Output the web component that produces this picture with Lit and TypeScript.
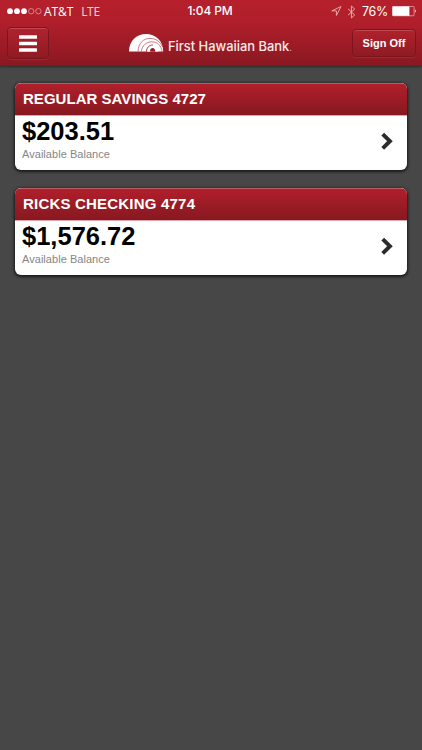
import { LitElement, html, css } from "lit";
import { customElement, property } from "lit/decorators.js";

@customElement("status-bar")
class StatusBar extends LitElement {
  static styles = css`
    :host { display: grid; grid-template-columns: 1fr auto 1fr; align-items: center; height: 22px; padding: 0 5px 0 7px; color: #fff; font: 12px/22px "Open Sans", "Noto Sans", sans-serif; }
    .side { display: flex; align-items: center; height: 22px; }
    .right { justify-content: flex-end; }
    .carrier { margin-left: 2px; letter-spacing: -0.1px; }
    .net { margin-left: 8px; opacity: 0.8; letter-spacing: -0.3px; }
    .time { font: 500 12px/22px Inter, "Open Sans", sans-serif; letter-spacing: -0.15px; margin-right: 4px; height: 23px; }
    .pct { font: 12.5px/22px Inter, sans-serif; margin: 0 4px 0 6px; letter-spacing: -0.3px; }
    svg { display: block; flex: none; }
    .bt { margin-left: 5px; }
  `;
  render() {
    return html`
      <div class="side">
        <svg width="35" height="7" viewBox="0 0 35 7">
          <g fill="#fff"><circle cx="3" cy="3.2" r="2.9" /><circle cx="10" cy="3.2" r="2.9" /><circle cx="17" cy="3.2" r="2.9" /></g>
          <g fill="none" stroke="#eba9ae" stroke-width=".7"><circle cx="24.2" cy="3.2" r="2.7" /><circle cx="31.4" cy="3.2" r="2.7" /></g>
        </svg>
        <span class="carrier">AT&amp;T</span><span class="net">LTE</span>
      </div>
      <span class="time">1:04 PM</span>
      <div class="side right">
        <svg width="11" height="11" viewBox="0 0 11 11" fill="none" stroke="#eab0b4" stroke-width=".9" stroke-linejoin="round"><path d="M10 .5L.8 4.9H5.4V9.5Z" /></svg>
        <svg class="bt" width="9" height="14" viewBox="0 0 9 14" fill="none" stroke="#eab0b4" stroke-width=".95"><path d="M1 3.8L7.7 10L4.4 13V1L7.7 4L1 10.2" /></svg>
        <span class="pct">76%</span>
        <svg width="25" height="11" viewBox="0 0 25 11"><rect x=".5" y=".4" width="21.6" height="9.4" rx="1" fill="none" stroke="#eab0b4" stroke-width=".8" /><rect x=".5" y=".4" width="16.9" height="9.4" fill="#fff" /><path d="M23 3.6Q24.8 5.1 23 6.7Z" fill="#fff" /></svg>
      </div>`;
  }
}

@customElement("account-card")
class AccountCard extends LitElement {
  @property() name = "";
  @property() balance = "";
  @property({ type: Number }) tracking = 0;
  static styles = css`
    :host { display: block; box-sizing: border-box; height: 87px; border-radius: 6px; overflow: hidden; background: #fff; box-shadow: 0 1px 3px 1px rgba(0, 0, 0, 0.65); font-family: "Liberation Sans", Arial, sans-serif; }
    .title { box-sizing: border-box; height: 33px; padding: 0 8px; border-top: 1px solid #bb5d65; border-bottom: 1px solid #dba5a9; background: linear-gradient(#b01f2b, #871820); color: #fff; font-size: 15px; font-weight: bold; line-height: 29px; white-space: nowrap; }
    .body { display: flex; align-items: flex-start; justify-content: space-between; height: 54px; padding: 0 13px 0 7px; }
    .amount { font-size: 25.5px; line-height: 28px; height: 28px; margin-top: 1px; font-weight: bold; color: #000; }
    .label { font-size: 11px; line-height: 14px; margin-top: 2px; color: #858585; letter-spacing: 0.04px; }
    svg { display: block; margin-top: 15px; }
  `;
  render() {
    return html`
      <div class="title" style="letter-spacing:${this.tracking}px">${this.name}</div>
      <div class="body">
        <div><div class="amount">${this.balance}</div><div class="label">Available Balance</div></div>
        <svg width="14" height="20" viewBox="0 0 14 20" fill="none" stroke="#2c2c2e" stroke-width="4"><path d="M2.7 3.1L9.9 10.2L2.7 17.3" /></svg>
      </div>`;
  }
}

@customElement("app-root")
class AppRoot extends LitElement {
  static styles = css`
    :host { display: block; height: 750px; background: #474747; font-family: "Liberation Sans", Arial, sans-serif; overflow: hidden; }
    header { box-sizing: border-box; height: 66px; border-bottom: 1px solid #5a2a2e; background: linear-gradient(#b5202c 0%, #b01f2b 35%, #8a1821 100%); box-shadow: 0 1px 2px rgba(0, 0, 0, 0.4); }
    .bar { display: grid; grid-template-columns: 122px 1fr auto; align-items: start; padding: 5px 6px 0 7px; }
    .btn { box-sizing: border-box; display: flex; align-items: center; justify-content: center; border: 1px solid #7b151d; border-radius: 4px; background: linear-gradient(#b0222d, #8f1a23); box-shadow: inset 0 1px 0 rgba(255, 255, 255, 0.18), 0 1px 0 rgba(255, 255, 255, 0.08); color: #fff; }
    .menu { width: 42px; height: 32px; }
    .off { width: 64px; height: 28px; margin-top: 2px; font-size: 11px; line-height: 14px; font-weight: bold; }
    .brand { display: flex; align-items: flex-start; color: #f8e9ea; padding-top: 7px; }
    .brand span { margin: 5px 0 0 4px; font: 500 12.9px/15px Inter, sans-serif; white-space: nowrap; }
    .brand small { font-size: 9px; opacity: 0.7; }
    main { display: flex; flex-direction: column; gap: 18px; padding: 17px 15px; }
    svg { display: block; flex: none; }
  `;
  render() {
    return html`
      <header>
        <status-bar></status-bar>
        <div class="bar">
          <div class="btn menu"><svg width="18" height="17" viewBox="0 0 18 17" fill="#fff"><rect width="18" height="3.4" y=".3" rx=".5" /><rect width="18" height="3.4" y="6.8" rx=".5" /><rect width="18" height="3.4" y="13.3" rx=".5" /></svg></div>
          <div class="brand">
            <svg width="35" height="18" viewBox="0 0 35 18">
              <path d="M0 17.4C0 7 7.5 0 17 0S34.2 7 34.2 17.4Z" fill="#fff" />
              <g fill="none" stroke="#b5424d" stroke-width=".7"><path d="M9 17.4C9.5 9 14.5 4.4 21 4.4C27 4.4 31.5 8 33.5 13" /><path d="M12.4 17.4C13 11.5 17.3 7.8 23 7.8C28.5 7.8 32 11.5 33 17.4" /></g>
              <path d="M18.2 17.4C18.7 13.8 20.8 11.6 23.8 11.6C27 11.6 28.9 14 29.3 17.4H26.2C26 15.9 25.2 15 23.8 15C22.4 15 21.6 15.9 21.4 17.4Z" fill="#fff" />
              <path d="M17.4 17.4C17.9 13.4 20.2 11 23.8 11" fill="none" stroke="#a2202b" stroke-width=".9" />
              <path d="M21 17.4C21.2 15 22.2 14 23.6 14C25 14 26 15.2 26.4 17.4Z" fill="#971b25" />
            </svg>
            <span>First Hawaiian Bank<small>.</small></span>
          </div>
          <div class="btn off">Sign Off</div>
        </div>
      </header>
      <main>
        <account-card name="REGULAR SAVINGS 4727" balance="$203.51" tracking="0.03"></account-card>
        <account-card name="RICKS CHECKING 4774" balance="$1,576.72" tracking="0.2"></account-card>
      </main>`;
  }
}
